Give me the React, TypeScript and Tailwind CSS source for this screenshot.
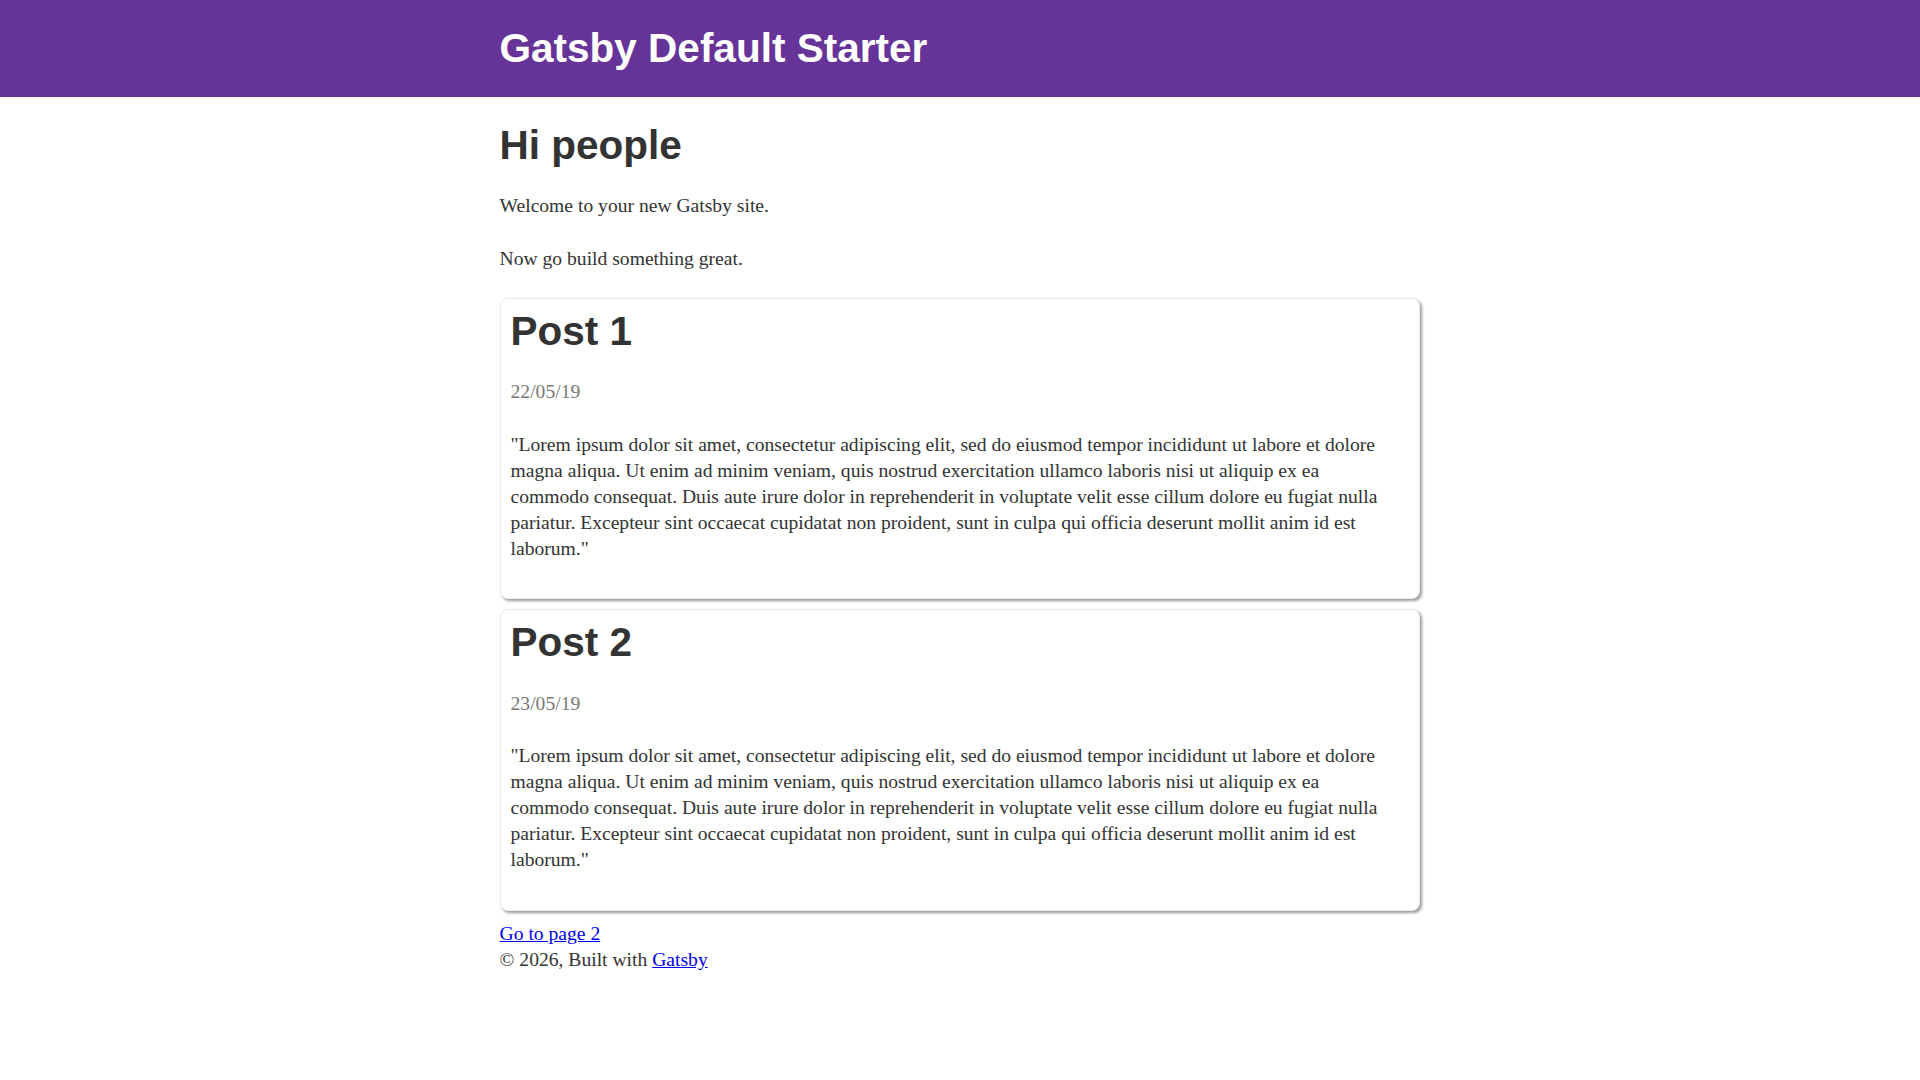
const loremLines = [
  '"Lorem ipsum dolor sit amet, consectetur adipiscing elit, sed do eiusmod tempor incididunt ut labore et dolore',
  "magna aliqua. Ut enim ad minim veniam, quis nostrud exercitation ullamco laboris nisi ut aliquip ex ea",
  "commodo consequat. Duis aute irure dolor in reprehenderit in voluptate velit esse cillum dolore eu fugiat nulla",
  "pariatur. Excepteur sint occaecat cupidatat non proident, sunt in culpa qui officia deserunt mollit anim id est",
  'laborum."',
];

const posts = [
  { title: "Post 1", date: "22/05/19" },
  { title: "Post 2", date: "23/05/19" },
];

const headingClass =
  "m-0 font-['Liberation_Sans',Arial,sans-serif] text-[40.5px] font-bold leading-[1.1]";

const PostCard = ({ title, date }: { title: string; date: string }) => (
  <div className="mb-[10px] rounded-lg border border-[#ececec] bg-white p-[10px] shadow-[2px_2px_3px_rgba(0,0,0,0.4)]">
    <h1 className={`${headingClass} mb-[26.1px] text-[#333]`}>{title}</h1>
    <p className="mb-[26.1px] text-[#777]">{date}</p>
    <p className="mb-[26.1px]">
      {loremLines.map((line, i) => (
        <span key={i}>
          {line}
          {i < loremLines.length - 1 && <br />}
        </span>
      ))}
    </p>
  </div>
);

export default function App() {
  return (
    <div className="min-h-screen bg-white font-['Liberation_Serif',Georgia,serif] text-[19.6px] leading-[26.1px] text-[#333]">
      <header className="mb-[26.1px] bg-[#663399]">
        <div className="mx-auto max-w-[960px] px-[19.575px] py-[26.1px]">
          <h1 className={`${headingClass} text-white`}>Gatsby Default Starter</h1>
        </div>
      </header>

      <div className="mx-auto max-w-[960px] px-[19.575px] pb-[26.1px]">
        <main>
          <h1 className={`${headingClass} mb-[26.1px] text-[#333]`}>Hi people</h1>
          <p className="mb-[26.1px]">Welcome to your new Gatsby site.</p>
          <p className="mb-[26.1px]">Now go build something great.</p>

          {posts.map((p) => (
            <PostCard key={p.title} title={p.title} date={p.date} />
          ))}

          <a href="#" className="text-[#0000ee] underline">
            Go to page 2
          </a>
        </main>
        <footer>
          © 2026, Built with{" "}
          <a href="#" className="text-[#0000ee] underline">
            Gatsby
          </a>
        </footer>
      </div>
    </div>
  );
}
